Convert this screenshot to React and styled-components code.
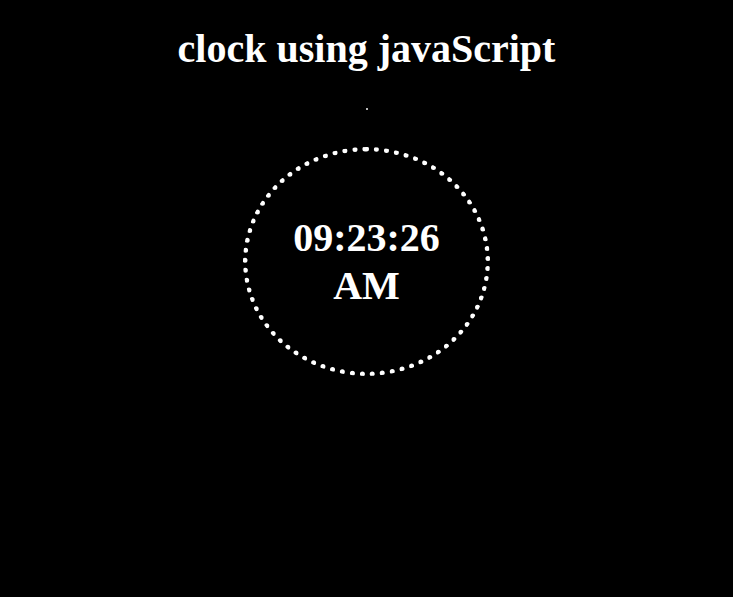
import React from 'react';
import styled, { createGlobalStyle } from 'styled-components';

const GlobalStyle = createGlobalStyle`
  html, body {
    margin: 0;
    padding: 0;
    background: #000;
  }
  body {
    font-family: "Liberation Serif", "Times New Roman", serif;
    color: #fff;
    min-height: 597px;
  }
`;

const Page = styled.div`
  display: flex;
  flex-direction: column;
  align-items: center;
  padding-top: 26px;
`;

const Title = styled.h1`
  margin: 0;
  font-size: 40px;
  line-height: 46px;
  font-weight: bold;
`;

const Spec = styled.div`
  width: 2px;
  height: 2px;
  margin-top: 36px;
  margin-left: 1px;
  background: #b8b8b8;
`;

const Dial = styled.div`
  box-sizing: border-box;
  width: 247px;
  height: 229px;
  margin-top: 37px;
  border: 5px dotted #fff;
  border-radius: 50%;
  display: flex;
  flex-direction: column;
  align-items: center;
  justify-content: center;
`;

const Line = styled.div`
  font-size: 40px;
  line-height: 48px;
  font-weight: bold;
  text-align: center;
`;

const App = () => {
  return (
    <>
      <GlobalStyle />
      <Page>
        <Title>clock using javaScript</Title>
        <Spec />
        <Dial>
          <Line>09:23:26</Line>
          <Line>AM</Line>
        </Dial>
      </Page>
    </>
  );
};

export default App;
